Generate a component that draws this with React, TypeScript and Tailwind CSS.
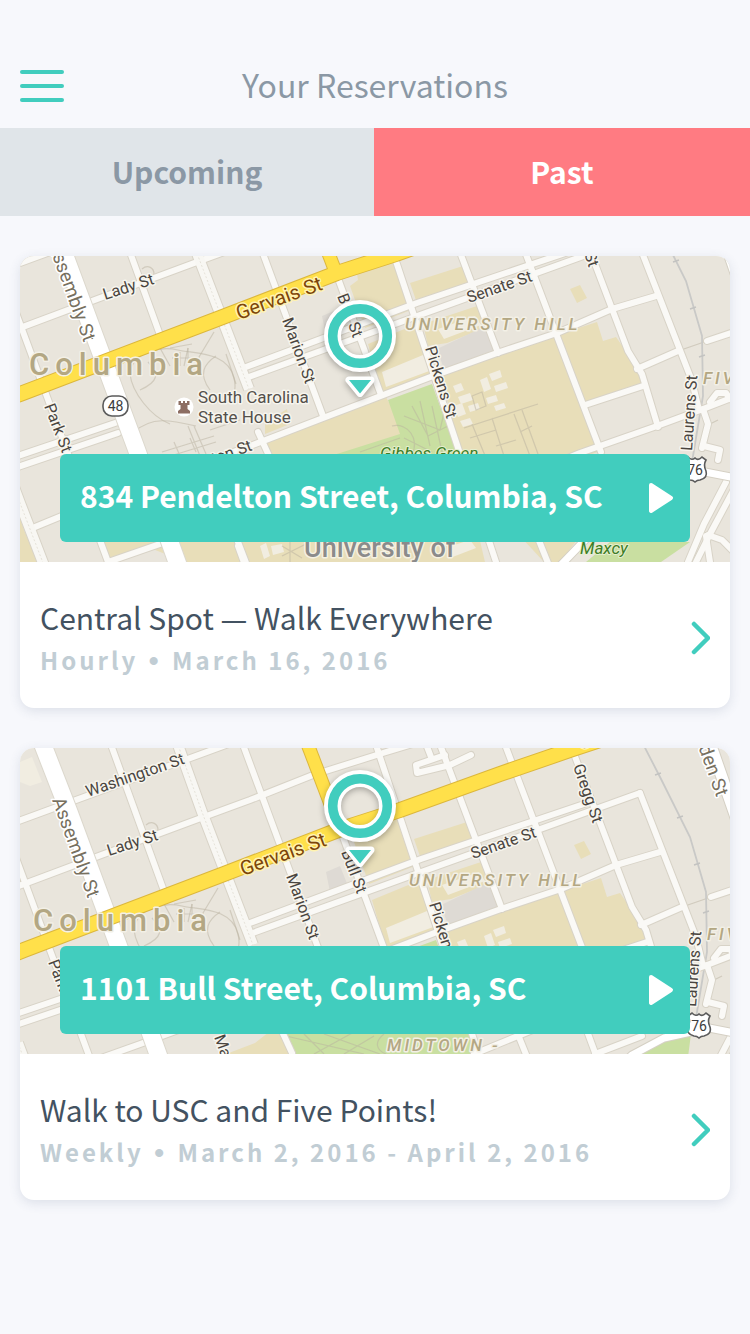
import React from "react";

type Point = [number, number];
type Region = "south" | "north";

interface Reservation {
  id: string;
  address: string;
  title: string;
  plan: string;
  dates: string;
  region: Region;
}

const reservations: Reservation[] = [
  {
    id: "central-spot",
    address: "834 Pendelton Street, Columbia, SC",
    title: "Central Spot — Walk Everywhere",
    plan: "Hourly",
    dates: "March 16, 2016",
    region: "south",
  },
  {
    id: "usc-five-points",
    address: "1101 Bull Street, Columbia, SC",
    title: "Walk to USC and Five Points!",
    plan: "Weekly",
    dates: "March 2, 2016 - April 2, 2016",
    region: "north",
  },
];

/* Both cards look at the same map, each through its own window. */
const views: Record<Region, { viewBox: string; marker: Point }> = {
  south: { viewBox: "0 0 710 306", marker: [340, 80] },
  north: { viewBox: "-4 -64 710 306", marker: [336, -6] },
};

/* Areas of the map, as polygon point lists. */
const campus = [
  "540,78 577,66 583,85 596,81 608,98 617,108 622,128 565,147",
  "550,33 560,29 567,42 557,47",
  "423,117 535,80 580,195 556,204 490,222 437,200",
  "330,30 338,24 336,12 370,2 377,4 396,52 345,72",
  "390,27 443,10 451,30 398,50",
  "348,88 399,67 407,87 413,117 362,136",
  "403,68 463,48 470,70 427,87 408,90",
  "245,182 366,141 384,175 440,200 465,306 166,306 130,292 88,306 78,286 150,262 231,231 245,220",
  "245,167 267,153 270,168 245,178",
  "-4,250 4,274 18,306 -4,306",
  "500,280 560,280 540,306 524,306",
];

const lawns = [
  "368,144 412,128 440,205 452,244 266,242 258,215 320,197 380,178",
  "566,306 590,286 670,286 641,306",
  "612,243 637,226 667,222 664,245 660,286 590,286",
];

const lightBlocks = [
  "362,116 403,99 412,114 366,131",
  "418,73 455,60 461,69 424,83",
  "-4,-50 8,-55 18,-30 6,-26 -4,-30",
  "433,130 441,127 444,134 436,137",
  "438,141 450,137 453,144 441,148",
  "434,150 442,147 446,158 438,161",
  "448,150 458,147 460,153 450,156",
  "460,124 467,121 471,133 464,136",
  "469,118 480,114 482,121 472,125",
  "474,130 486,126 488,132 476,136",
  "440,165 450,162 453,168 443,171",
  "466,142 476,139 478,145 468,148",
  "474,150 484,147 486,152 476,155",
  "428,291 450,284 456,292 430,302",
  "240,290 246,287 250,300 244,303",
  "251,290 262,288 264,296 253,299",
];

const greyBlocks = [
  "417,93 468,69 477,93 424,113",
  "302,60 316,54 324,74 306,80",
];

/* Ordinary streets, drawn with the same casing and width. */
const streets = [
  "-8,46 88,306",
  "86,-70 140,79",
  "218,290 226,312",
  "210,265 228,312",
  "218,-70 303,160",
  "316,17 361,139",
  "351,-70 478,312",
  "415,-70 478,97",
  "495,225 530,312",
  "480,-70 581,196",
  "556,200 573,246",
  "547,-66 608,95 622,118 638,171",
  "616,-19 672,125 678,150",
  "238,176 268,241",
  "-8,10 210,-70",
  "-8,75 80,42 177,6 226,-12 289,-37 359,-59 395,-70",
  "-8,202 98,166",
  "-8,213 98,177",
  "226,111 397,47 560,-8",
  "226,122 400,59 616,-19",
  "140,222 230,190 303,162 413,120 477,97 537,77 592,53 636,40",
  "15,271 66,250 119,231 190,205",
  "88,306 160,281",
  "617,113 658,95",
  "565,149 623,130",
  "450,242 560,197 637,170 683,153 714,141",
  "571,242 618,224",
  "683,153 688,168 682,192",
  "684,190 700,194 698,204",
  "690,146 697,137 706,137 710,143",
  "421,-57 392,-47 393,-39 426,-47 447,-57",
  "402,-68 407,-55",
  "687,85 714,76",
  "720,222 690,278 676,306",
  "706,226 684,268 668,306",
  "688,279 702,284 716,298",
  "686,280 690,306",
];

const footpaths = [
  "M110 118 C112 96 140 90 158 94 S208 96 214 122 S196 150 190 142 M110 118 C112 136 130 160 150 168",
  "M128 106 C140 118 138 126 120 134 M140 92 L150 110 M168 92 L164 110 M196 100 C184 108 178 118 190 134 M206 98 L216 128",
  "M194 76 L176 106 M150 92 L172 88 M152 102 L180 102 M160 96 V110 M168 92 V108",
  "M114 176 C132 160 150 164 176 170 M142 196 L194 180 M144 202 L196 186 M154 186 L160 200 M170 182 L176 196 M168 170 L180 200 M174 170 L186 198 M190 174 L220 164",
  "M122 13 C128 8 134 12 134 18",
  "M384 160 L420 174 L428 140 M392 150 L408 180 L432 168 M400 145 L410 190 M372 170 C388 166 400 184 392 198 M412 150 L422 196 M384 182 L412 196 M340 196 L380 182",
  "M262 224 L340 242 M280 222 L300 242 M290 242 L330 220 M300 222 L356 242 M320 242 L350 224 M360 222 C350 230 352 238 362 242",
  "M444 172 L518 148 M452 168 L466 202 M472 162 L484 200 M494 158 L510 200 M502 154 L518 198 M500 176 L512 170 M450 182 L476 174 M452 140 L462 136 L466 150 L456 154 Z M476 190 L496 184",
  "M658 95 L687 85 M690 168 L698 164",
  "M262 290 L282 302 M270 286 V306 M262 300 L290 286",
];

const railTicks: Point[] = [
  [656, 5],
  [673, 52],
  [682, 100],
  [634, -38],
];

interface Label {
  text: string;
  at: Point;
  turn: number;
  region?: Region;
}

const streetLabels: Label[] = [
  { text: "Washington St", at: [64, -15], turn: -19, region: "north" },
  { text: "Lady St", at: [85, 44], turn: -18 },
  { text: "Senate St", at: [449, 47], turn: -19 },
  { text: "Marion St", at: [262, 64], turn: 70 },
  { text: "Bull St", at: [317, 40], turn: 69 },
  { text: "Pickens St", at: [405, 92], turn: 73 },
  { text: "Gregg St", at: [549, -46], turn: 71 },
  { text: "Park St", at: [24, 150], turn: 69 },
  { text: "Laurens St", at: [672, 195], turn: -86 },
  { text: "Pendleton St", at: [148, 225], turn: -20, region: "south" },
  { text: "Main St", at: [190, 225], turn: 70, region: "north" },
];

const streetWidth = "[stroke-linecap:round] [stroke-linejoin:round]";
const halo = "[paint-order:stroke] [stroke-linejoin:round]";

function Shield({ x, y }: { x: number; y: number }) {
  return (
    <g transform={`translate(${x} ${y})`}>
      <path
        d="M-11 -10 L-7 -13 Q-3 -9 0 -12 Q3 -9 7 -13 L11 -10 Q8 -5 11 1 Q13 8 5 10 Q2 10 0 12 Q-2 10 -5 10 Q-13 8 -11 1 Q-8 -5 -11 -10 Z"
        fill="#fff"
        stroke="#5b5b5b"
        strokeWidth="1.6"
      />
      <text x="0" y="5" textAnchor="middle" fontSize="14" fill="#3c3c3c">
        76
      </text>
    </g>
  );
}

function Marker({ at }: { at: Point }) {
  return (
    <g
      transform={`translate(${at[0]} ${at[1]})`}
      className="[filter:drop-shadow(0_2px_3px_rgba(0,0,0,0.3))]"
      fill="none"
    >
      <circle r="27.5" stroke="#fff" strokeWidth="17" />
      <circle r="27.3" stroke="#41cdbe" strokeWidth="9.6" />
      <path d="M-11 44 H11 L0 57.5 Z" fill="#fff" stroke="#fff" strokeWidth="7" strokeLinejoin="round" />
      <path d="M-11 44 H11 L0 57.5 Z" fill="#41cdbe" />
    </g>
  );
}

function StreetMap({ region }: { region: Region }) {
  const { viewBox, marker } = views[region];
  return (
    <svg
      viewBox={viewBox}
      preserveAspectRatio="xMidYMid slice"
      role="img"
      aria-label="Map of downtown Columbia"
      className="block h-[306px] w-full bg-[#e9e5dc] font-['Roboto',sans-serif]"
    >
      <g fill="#e8deb9">
        {campus.map((p) => (
          <polygon key={p} points={p} />
        ))}
      </g>
      <g fill="#c9dfa1">
        {lawns.map((p) => (
          <polygon key={p} points={p} />
        ))}
      </g>
      <g fill="#f1ede1">
        {lightBlocks.map((p) => (
          <polygon key={p} points={p} />
        ))}
      </g>
      <g fill="#dedad4">
        {greyBlocks.map((p) => (
          <polygon key={p} points={p} />
        ))}
      </g>
      <g fill="none" stroke="#b9b2a0" strokeOpacity="0.5" strokeWidth="1.2">
        {footpaths.map((d) => (
          <path key={d} d={d} />
        ))}
      </g>

      <path
        d="M618 -70 L636 -35 L666 25 L682 80 L683 140 L672 206"
        fill="none"
        stroke="#c9c9c7"
        strokeWidth="1.8"
      />
      <g stroke="#c3c3c1" strokeWidth="1.4">
        {railTicks.map(([x, y]) => (
          <path key={y} d={`M${x - 3} ${y + 1} L${x + 3} ${y - 1}`} />
        ))}
      </g>

      <g fill="none" stroke="#d8d3c7" strokeWidth="8" className={streetWidth}>
        {streets.map((p) => (
          <polyline key={p} points={p} />
        ))}
      </g>
      <g fill="none" stroke="#d8d3c7" strokeWidth="12">
        <polyline points="153,-70 178,0 229,133" />
        <polyline points="-6,231 0,247 25,312" />
      </g>
      <g fill="none" stroke="#faf9f6" strokeWidth="6" className={streetWidth}>
        {streets.map((p) => (
          <polyline key={p} points={p} />
        ))}
      </g>
      <g fill="none" stroke="#f8f7f3" strokeWidth="10">
        <polyline points="153,-70 178,0 229,133" />
        <polyline points="-6,231 0,247 25,312" />
      </g>
      <g fill="none" stroke="#e6e3da" strokeWidth="1" strokeDasharray="2 2">
        <polyline points="153,-70 178,0 229,133" />
        <polyline points="-6,231 0,247 25,312" />
      </g>

      <g fill="none" strokeLinejoin="round">
        <polyline points="538,312 565,284 608,243 640,226 685,216 716,222" stroke="#d5d0c4" strokeWidth="9" />
        <polyline points="538,312 565,284 608,243 640,226 685,216 716,222" stroke="#fff" strokeWidth="7" />
        <polyline points="685,-72 716,17" stroke="#d5d0c4" strokeWidth="13" />
        <polyline points="685,-72 716,17" stroke="#fff" strokeWidth="11" />
        <polyline points="17,-72 45,0 116,192 157,306 160,314" stroke="#dcd8cd" strokeWidth="19" />
        <polyline points="17,-72 45,0 116,192 157,306 160,314" stroke="#fff" strokeWidth="17" />
        <polyline points="282,-72 316,17" stroke="#dcb73c" strokeWidth="14" />
        <polyline
          points="-10,142 0,138 200,62 317,17 376,-2 476,-38 546,-62 576,-72"
          stroke="#dcb73c"
          strokeWidth="16"
        />
        <polyline points="282,-72 316,17" stroke="#ffe04a" strokeWidth="12" />
        <polyline
          points="-10,142 0,138 200,62 317,17 376,-2 476,-38 546,-62 576,-72"
          stroke="#ffe04a"
          strokeWidth="14"
        />
      </g>

      <g fontSize="16" fill="#4a453f" stroke="#f7f5ee" strokeWidth="3" className={halo}>
        {streetLabels
          .filter((label) => !label.region || label.region === region)
          .map(({ text, at, turn }) => (
            <text key={text} transform={`translate(${at[0]} ${at[1]}) rotate(${turn})`}>
              {text}
            </text>
          ))}
      </g>
      <g fontSize="19" fill="#77705f" stroke="#fff" strokeWidth="3" className={halo}>
        <text transform="translate(28 -12) rotate(70)">Assembly St</text>
        {region === "north" && <text transform="translate(664 -93) rotate(70)">Harden St</text>}
      </g>
      <g fontSize="20" fill="#7d4508" stroke="#fff3b0" strokeWidth="3" className={halo}>
        <text transform="translate(219 64) rotate(-20)">Gervais St</text>
        {region === "north" && <text transform="translate(556 -62) rotate(-20)">Gervais St</text>}
      </g>

      <g fill="#b3a783" stroke="#f3f0e6" strokeWidth="3" className={halo}>
        <text x="9" y="119" fontSize="31" className="font-medium tracking-[6px]">
          Columbia
        </text>
        <g fontSize="17" className="font-medium italic tracking-[3px]">
          <text x="385" y="74">
            UNIVERSITY HILL
          </text>
          <text x="683" y="128">
            FIVE POINTS
          </text>
          {region === "north" && (
            <text x="363" y="239">
              MIDTOWN -
            </text>
          )}
        </g>
      </g>

      {region === "south" && (
        <>
          <g fontSize="17" fill="#54504b" stroke="#f7f5ee" strokeWidth="3" className={halo}>
            <text x="178" y="147">
              South Carolina
            </text>
            <text x="178" y="167">
              State House
            </text>
          </g>
          <g fontSize="17" fill="#3f7d26" stroke="#e6efcf" strokeWidth="2" className={`${halo} italic`}>
            <text x="360" y="203">
              Gibbes Green
            </text>
            <text x="560" y="298">
              Maxcy
            </text>
          </g>
          <text
            x="284"
            y="301"
            fontSize="27"
            fill="#8b8b8b"
            stroke="#f5f1e2"
            strokeWidth="3"
            className={`${halo} font-medium`}
          >
            University of
          </text>
          <circle cx="164" cy="151" r="9.5" fill="#fff" />
          <path
            d="M158.500 145 h2.500 v2 h2 v-2 h2 v2 h2 v-2 h2.500 v4 h-2 v4 l2.500 2 v2.500 h-12 v-2.500 l2.500 -2 v-4 h-2 Z"
            fill="#8d6e63"
          />
          <rect x="83" y="140" width="25" height="20" rx="9" fill="#fff" stroke="#5b5b5b" strokeWidth="1.6" />
          <text x="95.500" y="155" textAnchor="middle" fontSize="14" fill="#3c3c3c">
            48
          </text>
        </>
      )}
      <Shield x={675} y={214} />

      <Marker at={marker} />
    </svg>
  );
}

function ReservationCard({ reservation }: { reservation: Reservation }) {
  const { address, title, plan, dates, region } = reservation;
  return (
    <article className="overflow-hidden rounded-[14px] bg-white shadow-[0_3px_12px_rgba(60,80,110,0.14)]">
      <div className="relative">
        <StreetMap region={region} />
        <a
          href="#directions"
          className="absolute inset-x-10 bottom-5 flex h-22 items-center justify-between rounded-md bg-[#41cdbe] pr-4 pl-5 text-[30px] leading-none font-bold text-white"
        >
          <span className="pb-1.5">{address}</span>
          <svg viewBox="0 0 26 32" className="h-8 w-[26px] shrink-0" aria-hidden="true">
            <path
              d="M3 3 L23 16 L3 29 Z"
              fill="currentColor"
              stroke="currentColor"
              strokeWidth="4"
              strokeLinejoin="round"
            />
          </svg>
        </a>
      </div>
      <a href="#reservation" className="flex h-[146px] items-center justify-between px-5 pt-1.5">
        <div className="flex flex-col">
          <h2 className="text-[30px] leading-[44px] font-normal text-[#435261]">{title}</h2>
          <p className="text-[24px] leading-[42px] font-bold tracking-[3px] text-[#c1cdd4]">
            {plan} <span className="mx-0.5 font-['Liberation_Sans',sans-serif] text-[28px] leading-none">•</span>{" "}
            {dates}
          </p>
        </div>
        <svg viewBox="0 0 20 34" className="h-[34px] w-5 shrink-0" aria-hidden="true">
          <path
            d="M4 3 L18 17 L4 31"
            fill="none"
            stroke="#41cdbe"
            strokeWidth="4.500"
            strokeLinecap="round"
            strokeLinejoin="round"
          />
        </svg>
      </a>
    </article>
  );
}

export default function App() {
  return (
    <div className="min-h-screen bg-[#f7f8fc] font-['Noto_Sans_CJK_SC',sans-serif]">
      <header className="grid h-32 grid-cols-[44px_1fr_44px] items-center px-5 pt-11">
        <button type="button" aria-label="Menu" className="flex flex-col gap-2.5">
          <span className="h-1 w-11 rounded-full bg-[#41cdbe]" />
          <span className="h-1 w-11 rounded-full bg-[#41cdbe]" />
          <span className="h-1 w-11 rounded-full bg-[#41cdbe]" />
        </button>
        <h1 className="pb-1 text-center text-[32px] leading-none font-normal text-[#8b98a5]">Your Reservations</h1>
      </header>
      <nav className="grid h-22 grid-cols-[374fr_376fr] text-[30px] leading-none font-bold">
        <button type="button" className="bg-[#e0e5e9] pb-0.5 text-[#8b98a5]">
          Upcoming
        </button>
        <button type="button" aria-current="page" className="bg-[#ff7b82] pb-0.5 text-white">
          Past
        </button>
      </nav>
      <main className="flex flex-col gap-10 px-5 py-10">
        {reservations.map((r) => (
          <ReservationCard key={r.id} reservation={r} />
        ))}
      </main>
    </div>
  );
}
